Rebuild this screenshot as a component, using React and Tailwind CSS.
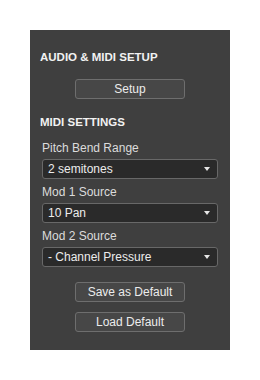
import React from "react";

const font = { fontFamily: '"Liberation Sans", Arial, sans-serif' };

function Caret() {
  return (
    <svg width="6" height="4" viewBox="0 0 6 4" className="shrink-0">
      <path d="M0 0 H6 L3 4 Z" fill="#e6e6e6" />
    </svg>
  );
}

function Select({ value, className = "" }) {
  return (
    <div
      className={`flex h-[20px] items-center justify-between rounded-[3px] border border-[#686868] bg-[#2a2a2a] pl-[5px] pr-[7px] text-[12px] leading-[14px] text-[#ececec] ${className}`}
    >
      <span>{value}</span>
      <Caret />
    </div>
  );
}

function Button({ children, className = "" }) {
  return (
    <div className={`flex justify-center ${className}`}>
      <div className="flex h-[20px] w-[110px] items-center justify-center rounded-[3px] border border-[#6e6e6e] bg-[#474747] text-[12px] leading-[14px] text-[#ececec]">
        {children}
      </div>
    </div>
  );
}

export default function App() {
  return (
    <div className="min-h-[380px] w-[260px] bg-white pt-[30px] pl-[30px]" style={font}>
      <div className="flex h-[320px] w-[200px] flex-col bg-[#3f3f3f] pt-[20px]">
        <div className="px-[10px] text-[11.5px] font-bold leading-[14px] text-[#f2f2f2]">
          AUDIO &amp; MIDI SETUP
        </div>
        <Button className="mt-[15px]">Setup</Button>
        <div className="mt-[16px] px-[10px] text-[11.5px] font-bold leading-[14px] text-[#f2f2f2]">
          MIDI SETTINGS
        </div>
        <div className="flex flex-col px-[12px]">
          <div className="mt-[12px] text-[12px] leading-[14px] text-[#dcdcdc]">Pitch Bend Range</div>
          <Select className="mt-[4px]" value="2 semitones" />
          <div className="mt-[6px] text-[12px] leading-[14px] text-[#dcdcdc]">Mod 1 Source</div>
          <Select className="mt-[4px]" value="10 Pan" />
          <div className="mt-[6px] text-[12px] leading-[14px] text-[#dcdcdc]">Mod 2 Source</div>
          <Select className="mt-[4px]" value="- Channel Pressure" />
        </div>
        <Button className="mt-[15px]">Save as Default</Button>
        <Button className="mt-[10px]">Load Default</Button>
      </div>
    </div>
  );
}
